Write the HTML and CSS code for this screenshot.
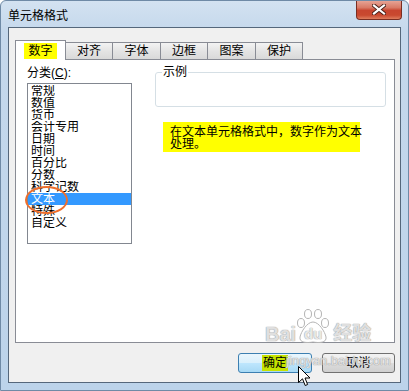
FILE: index.html
```html
<!DOCTYPE html>
<html lang="zh-CN">
<head>
  <meta charset="UTF-8" />
  <title>单元格格式</title>
  <link rel="stylesheet" href="styles.css">
</head>
<body>

  <div class="window">
    <div class="titlebar">
      <span class="title">单元格格式</span>
      <div class="close">
        <svg width="14" height="11" viewBox="0 0 14 11">
          <path d="M2 1.5 L12 9.5 M12 1.5 L2 9.5" stroke="#4a2018" stroke-width="4" stroke-linecap="square"/>
          <path d="M2 1.5 L12 9.5 M12 1.5 L2 9.5" stroke="#fff" stroke-width="2.2" stroke-linecap="square"/>
        </svg>
      </div>
    </div>

    <div class="client">
      <!-- tab strip -->
      <div class="tabs">
        <div class="tab active"><span class="mark">数字</span></div>
        <div class="tab">对齐</div>
        <div class="tab wide">字体</div>
        <div class="tab">边框</div>
        <div class="tab wide">图案</div>
        <div class="tab">保护</div>
      </div>

      <div class="panel">
        <div class="col-left">
          <div class="label">分类(<u>C</u>):</div>
          <div class="listbox">
            <div class="item">常规</div>
            <div class="item">数值</div>
            <div class="item">货币</div>
            <div class="item">会计专用</div>
            <div class="item">日期</div>
            <div class="item">时间</div>
            <div class="item">百分比</div>
            <div class="item">分数</div>
            <div class="item">科学记数</div>
            <div class="item selected">文本</div>
            <div class="item">特殊</div>
            <div class="item">自定义</div>
            <div class="ring"></div>
          </div>
        </div>

        <div class="col-right">
          <fieldset class="sample">
            <legend>示例</legend>
            <div class="sample-body"></div>
          </fieldset>
          <div class="note">在文本单元格格式中，数字作为文本<br>处理。</div>
        </div>
      </div>

      <div class="buttons">
        <div class="btn default"><span class="mark-green">确定</span></div>
        <div class="btn">取消</div>
      </div>
    </div>

    <!-- watermark + mouse pointer lie over the dialog -->
    <div class="watermark">
      <div class="wm-row">
        <span>Bai</span>
        <span class="paw">
          <svg width="32" height="36" viewBox="0 0 32 36">
            <g fill="rgba(255,255,255,0.6)" stroke="#b4b4b4" stroke-width="1">
              <ellipse cx="4" cy="15" rx="3.5" ry="4.5"/>
              <ellipse cx="11" cy="6" rx="3.5" ry="4.5"/>
              <ellipse cx="21" cy="6" rx="3.5" ry="4.5"/>
              <ellipse cx="28" cy="15" rx="3.5" ry="4.5"/>
              <path d="M16 14 C10 14 4 24 3 29 C2 35 10 35 16 34 C22 35 30 35 29 29 C28 24 22 14 16 14 Z"/>
            </g>
          </svg>
          <span class="du">du</span>
        </span>
        <span class="wm-cn">经验</span>
      </div>
      <div class="wm-small">jingyan.baidu.com</div>
    </div>
    <svg class="cursor" width="13" height="21" viewBox="0 0 13 21">
      <path d="M0.5 0.5 L0.5 16.5 L4.5 12.8 L7.2 19.5 L9.6 18.5 L7 12 L12 12 Z" fill="#fff" stroke="#000" stroke-width="1" stroke-linejoin="miter"/>
    </svg>
  </div>

</body>
</html>
```

FILE: styles.css
```css
* {
  box-sizing: border-box;
  margin: 0;
  padding: 0;
}
body {
  font-family: "Liberation Sans", "Noto Sans CJK SC", sans-serif;
  font-size: 12px;
  color: #000;
  background: #fff;
}
.window {
  position: relative;
  width: 409px;
  height: 391px;
  padding: 0 7px 7px;
  display: flex;
  flex-direction: column;
  background: linear-gradient(to bottom, #d3e2f1 0px, #c5d8ec 30px, #bcd3ea 100%);
  border: 1px solid #6f8aa6;
  border-radius: 6px 6px 0 0;
  overflow: hidden;
}
.titlebar {
  height: 26px;
  display: flex;
  align-items: flex-start;
}
.title {
  margin-top: 8px;
  line-height: 14px;
  color: #000;
}
.close {
  margin-left: auto;
  margin-top: -1px;
  margin-right: -1px;
  width: 46px;
  height: 20px;
  display: flex;
  align-items: center;
  justify-content: center;
  border: 1px solid #7a2e22;
  border-top: none;
  border-radius: 0 0 4px 4px;
  background: linear-gradient(to bottom, #e9a99b 0%, #d97a66 40%, #c8452f 55%, #c9492f 80%, #df7d5e 100%);
}
.client {
  flex: 1;
  display: flex;
  flex-direction: column;
  border: 1px solid #55677b;
  background: #f0f0f0;
  padding: 12px 5px 9px 6px;
}
.tabs {
  display: flex;
  align-items: flex-end;
  height: 20px;
  margin-bottom: -1px;
  position: relative;
  z-index: 1;
}
.tab {
  width: 47px;
  height: 18px;
  border: 1px solid #898c95;
  border-left: none;
  background: linear-gradient(to bottom, #f3f3f3, #e4e4e4 50%, #d9d9d9);
  text-align: center;
  line-height: 16px;
}
.tab.wide {
  width: 48px;
}
.tab.active {
  width: 51px;
  height: 20px;
  border-left: 1px solid #898c95;
  border-bottom: none;
  background: #fff;
  line-height: 18px;
  padding-top: 1px;
}
.mark {
  display: inline-block;
  background: #ffff00;
  padding: 0 4px;
  line-height: 16px;
}
.panel {
  flex: 1;
  display: flex;
  border: 1px solid #898c95;
  background: #fff;
  padding: 6px 8px 0 11px;
}
.col-left {
  width: 105px;
}
.label {
  line-height: 14px;
  margin-bottom: 3px;
}
.listbox {
  position: relative;
  height: 161px;
  border: 1px solid #828790;
  padding-top: 1px;
}
.item {
  height: 12px;
  line-height: 12px;
  padding-left: 3px;
  overflow: hidden;
  white-space: nowrap;
}
.item.selected {
  background: #3399ff;
  color: #fff;
}
.ring {
  position: absolute;
  left: -3px;
  top: 102px;
  width: 43px;
  height: 28px;
  border: 2px solid #ef6f2c;
  border-radius: 50%;
}
.col-right {
  flex: 1;
  margin-left: 23px;
}
.sample {
  border: 1px solid #d5dfe5;
  border-radius: 3px;
  padding: 0;
}
.sample legend {
  margin-left: 6px;
  padding: 0 1px;
  line-height: 13px;
}
.sample-body {
  height: 27px;
}
.note {
  margin: 15px 0 0 8px;
  width: 197px;
  height: 30px;
  background: #ffff00;
  padding: 4px 0 0 7px;
  line-height: 12px;
  white-space: nowrap;
}
.buttons {
  display: flex;
  justify-content: flex-end;
  gap: 10px;
  margin-top: 10px;
}
.btn {
  width: 73px;
  height: 20px;
  border: 1px solid #707070;
  border-radius: 3px;
  background: linear-gradient(to bottom, #f2f2f2 0%, #ebebeb 50%, #dddddd 51%, #cfcfcf 100%);
  text-align: center;
  line-height: 18px;
}
.btn.default {
  width: 74px;
  border-color: #3c7fb1;
  background: linear-gradient(to bottom, #eaf6fd 0%, #d9f0fc 50%, #bee6fd 51%, #a7d9f5 100%);
}
.mark-green {
  display: inline-block;
  background: #c6e400;
  line-height: 16px;
  padding: 0 1px;
}
.watermark {
  position: absolute;
  left: 264px;
  top: 320px;
  pointer-events: none;
  color: rgba(255, 255, 255, 0.7);
  text-shadow: 0 0 1px #9a9a9a, 0 0 1px #9a9a9a;
}
.wm-row {
  display: flex;
  align-items: flex-end;
  font-size: 20px;
  font-weight: bold;
  line-height: 22px;
}
.paw {
  position: relative;
  width: 32px;
  margin-left: 1px;
  text-align: center;
}
.paw svg {
  position: absolute;
  left: 0;
  top: -13px;
}
.du {
  position: relative;
  font-size: 15px;
  color: rgba(255, 255, 255, 0.8);
}
.wm-cn {
  margin-left: 4px;
  font-size: 19px;
}
.wm-small {
  margin: 9px 0 0 21px;
  font-size: 13px;
  line-height: 14px;
}
.cursor {
  position: absolute;
  left: 297px;
  top: 365px;
}
```
